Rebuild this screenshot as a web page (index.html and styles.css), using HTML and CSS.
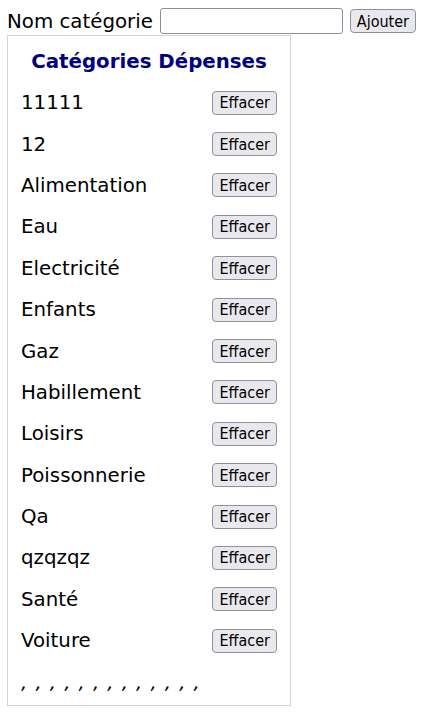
FILE: index.html
```html
<!DOCTYPE html>
<html lang="fr">
<head>
<meta charset="utf-8">
<link rel="stylesheet" href="styles.css">
</head>
<body>
<form class="add-form">
  <label class="add-label" for="nom">Nom catégorie</label>
  <input class="add-input" id="nom" type="text">
  <button class="btn" type="button">Ajouter</button>
</form>
<div class="panel">
  <h2 class="panel-title">Catégories Dépenses</h2>
  <ul class="cat-list">
    <li class="cat-row"><span>11111</span><button class="btn" type="button">Effacer</button></li>
    <li class="cat-row"><span>12</span><button class="btn" type="button">Effacer</button></li>
    <li class="cat-row"><span>Alimentation</span><button class="btn" type="button">Effacer</button></li>
    <li class="cat-row"><span>Eau</span><button class="btn" type="button">Effacer</button></li>
    <li class="cat-row"><span>Electricité</span><button class="btn" type="button">Effacer</button></li>
    <li class="cat-row"><span>Enfants</span><button class="btn" type="button">Effacer</button></li>
    <li class="cat-row"><span>Gaz</span><button class="btn" type="button">Effacer</button></li>
    <li class="cat-row"><span>Habillement</span><button class="btn" type="button">Effacer</button></li>
    <li class="cat-row"><span>Loisirs</span><button class="btn" type="button">Effacer</button></li>
    <li class="cat-row"><span>Poissonnerie</span><button class="btn" type="button">Effacer</button></li>
    <li class="cat-row"><span>Qa</span><button class="btn" type="button">Effacer</button></li>
    <li class="cat-row"><span>qzqzqz</span><button class="btn" type="button">Effacer</button></li>
    <li class="cat-row"><span>Santé</span><button class="btn" type="button">Effacer</button></li>
    <li class="cat-row"><span>Voiture</span><button class="btn" type="button">Effacer</button></li>
  </ul>
  <p class="separators">, , , , , , , , , , , , ,</p>
</div>
</body>
</html>
```
FILE: styles.css
```css
html, body {
  background: #ffffff;
}
body {
  margin: 8px 7px;
  font-family: "DejaVu Sans", Verdana, sans-serif;
  font-size: 19.8px;
  color: #000000;
}
.add-form {
  display: flex;
  align-items: center;
  gap: 6px;
  height: 26px;
  margin: 0;
}
.add-input {
  width: 183px;
  height: 26px;
  box-sizing: border-box;
  border: 1px solid #8f8f9d;
  border-radius: 3px;
  padding: 0 4px;
  font-size: 16px;
  margin-left: 1px;
  margin-right: 1px;
}
.btn {
  font-family: "DejaVu Sans Condensed", "DejaVu Sans", sans-serif;
  font-size: 16px;
  height: 24px;
  padding: 0 6px;
  background: #e9e9ed;
  border: 1px solid #8f8f9d;
  border-radius: 4px;
  color: #000000;
}
.panel {
  width: 284px;
  box-sizing: border-box;
  border: 1px solid #d3d3d3;
  margin-top: 1px;
  padding: 0 13px;
}
.panel-title {
  margin: 14px 0 9px;
  text-align: center;
  color: #000080;
  font-size: 19.8px;
  font-weight: bold;
}
.cat-list {
  list-style: none;
  margin: 0;
  padding: 0;
}
.cat-row {
  display: flex;
  justify-content: space-between;
  align-items: center;
  height: 41.4px;
}
.separators {
  margin: 10px 0 11px;
  font-style: italic;
  word-spacing: 1.8px;
}
```
